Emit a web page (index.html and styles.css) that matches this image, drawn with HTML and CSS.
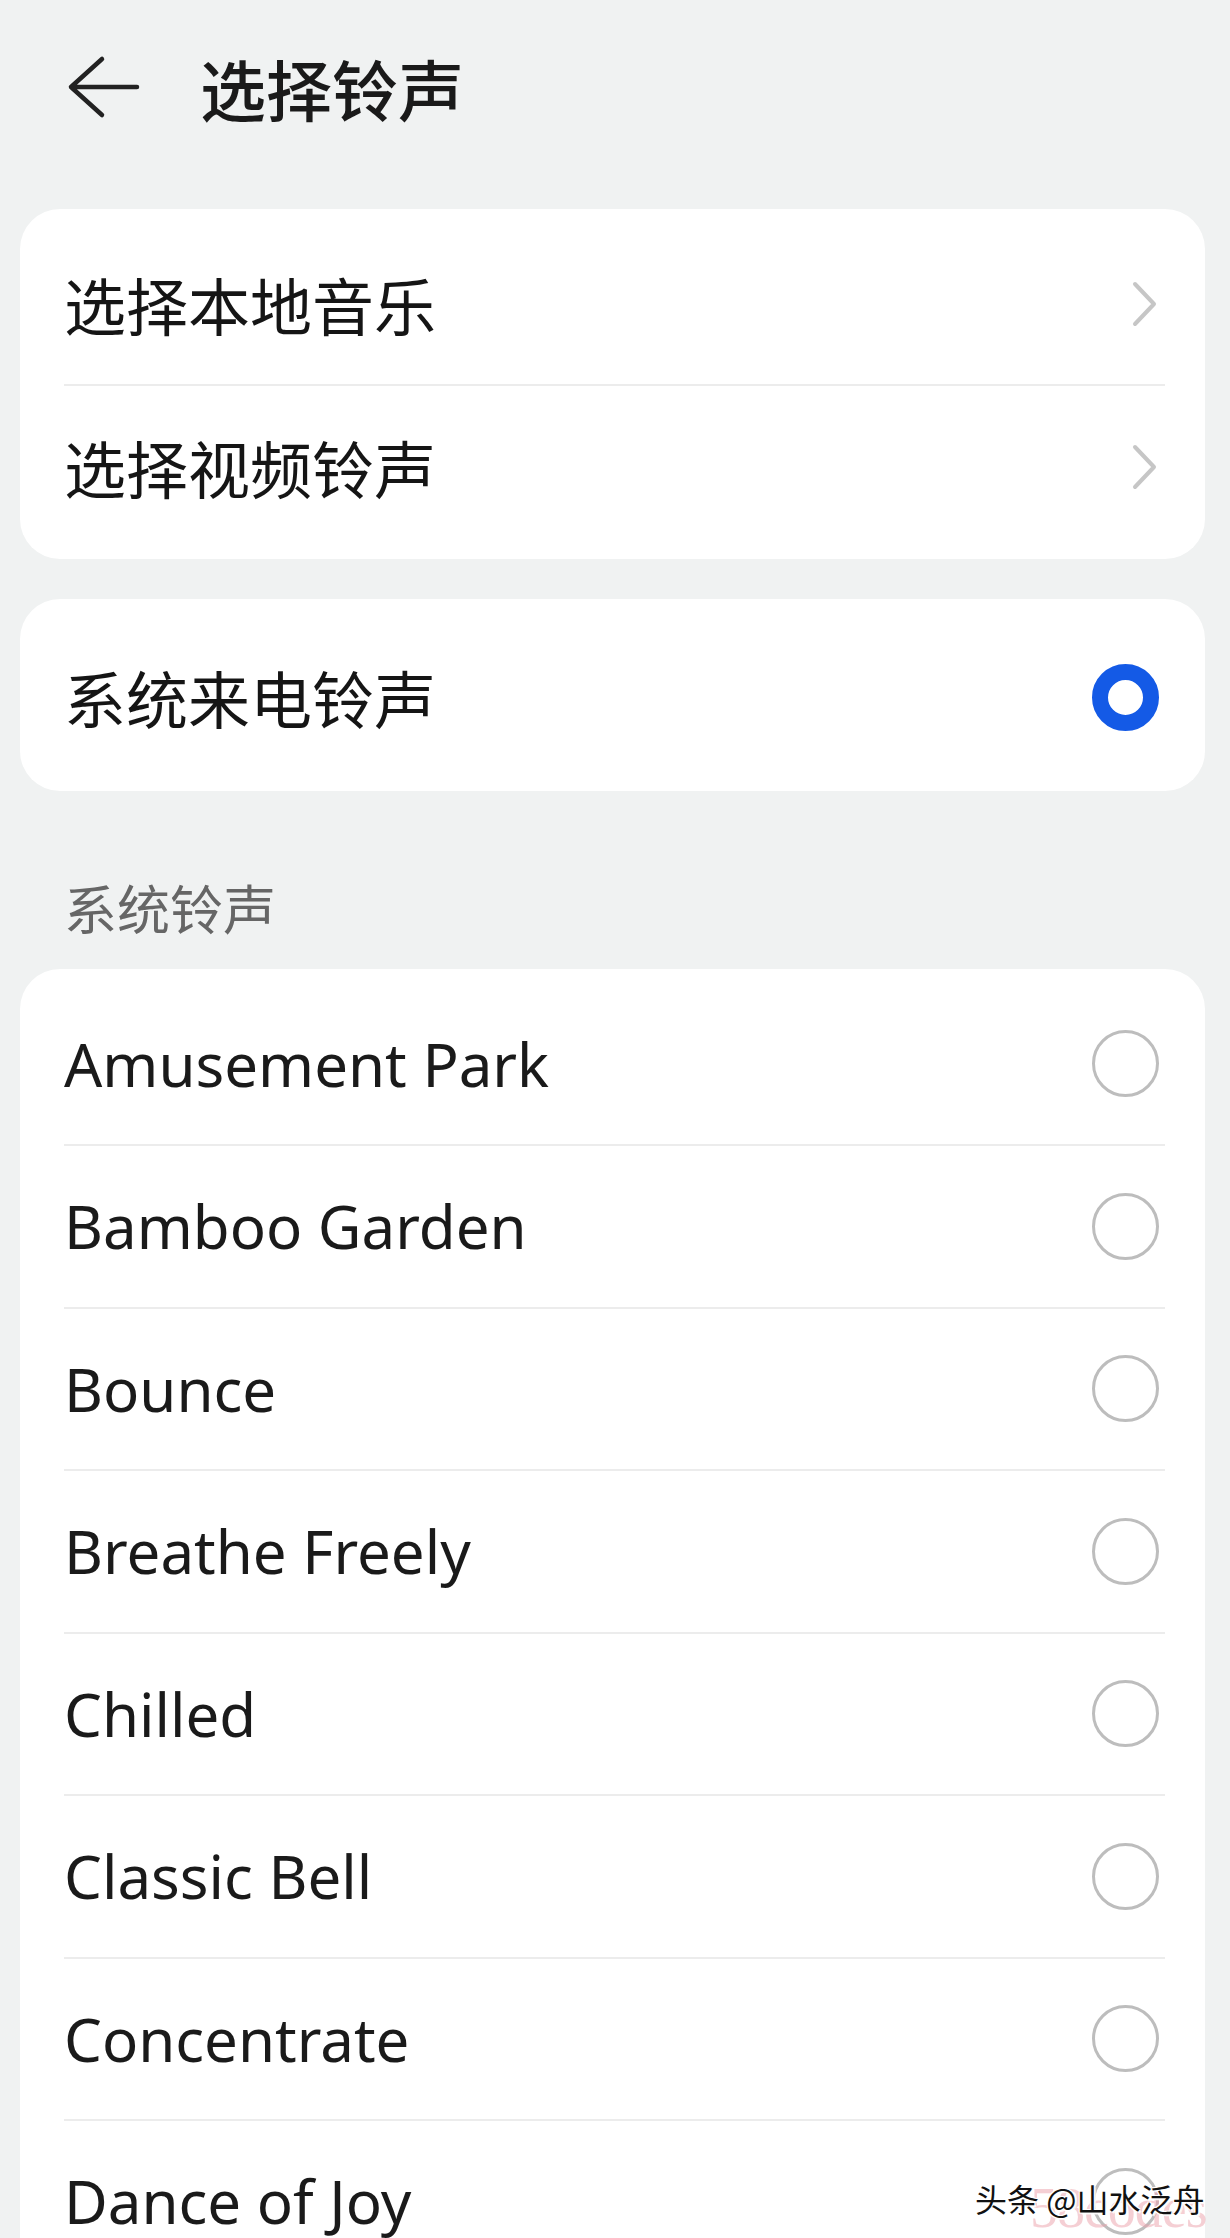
FILE: index.html
```html
<!DOCTYPE html>
<html lang="zh-CN">
<head>
<meta charset="utf-8">
<title>选择铃声</title>
<link rel="stylesheet" href="styles.css">
</head>
<body>
<div class="page">
  <header class="topbar">
    <svg class="back" viewBox="0 0 74 68" width="74" height="68" aria-hidden="true">
      <path d="M36 6 L5 34 L36 62 M5 34 H71" fill="none" stroke="#222" stroke-width="4.5" stroke-linecap="round" stroke-linejoin="round"/>
    </svg>
    <h1 class="title">选择铃声</h1>
  </header>

  <section class="card card-links">
    <div class="row link-row">
      <span class="label cjk">选择本地音乐</span>
      <svg class="chev" viewBox="0 0 28 46" width="28" height="46" aria-hidden="true"><path d="M4 3 L23 23 L4 43" fill="none" stroke="#c6c6c6" stroke-width="4" stroke-linecap="round" stroke-linejoin="round"/></svg>
    </div>
    <div class="row link-row">
      <span class="label cjk">选择视频铃声</span>
      <svg class="chev" viewBox="0 0 28 46" width="28" height="46" aria-hidden="true"><path d="M4 3 L23 23 L4 43" fill="none" stroke="#c6c6c6" stroke-width="4" stroke-linecap="round" stroke-linejoin="round"/></svg>
    </div>
  </section>

  <section class="card card-single">
    <div class="row single-row">
      <span class="label cjk">系统来电铃声</span>
      <span class="radio radio-on"></span>
    </div>
  </section>

  <div class="section-title">系统铃声</div>

  <section class="card card-list">
    <div class="row item"><span class="label">Amusement Park</span><span class="radio"></span></div>
    <div class="row item"><span class="label">Bamboo Garden</span><span class="radio"></span></div>
    <div class="row item"><span class="label">Bounce</span><span class="radio"></span></div>
    <div class="row item"><span class="label">Breathe Freely</span><span class="radio"></span></div>
    <div class="row item"><span class="label">Chilled</span><span class="radio"></span></div>
    <div class="row item"><span class="label">Classic Bell</span><span class="radio"></span></div>
    <div class="row item"><span class="label">Concentrate</span><span class="radio"></span></div>
    <div class="row item"><span class="label">Dance of Joy</span><span class="radio"></span></div>
  </section>

  <div class="wm-pink">58codes</div>
  <div class="wm">头条 @山水泛舟</div>
</div>
</body>
</html>
```

FILE: styles.css
```css
html, body {
  margin: 0;
  padding: 0;
  height: 2238px;
  overflow: hidden;
  background: #f0f2f2;
}

.page {
  position: relative;
  height: 2238px;
  overflow: hidden;
  font-family: "Noto Sans", "Noto Sans CJK SC", sans-serif;
  color: #1a1a1a;
}

.topbar {
  display: flex;
  align-items: center;
  height: 174px;
  padding-left: 66px;
  box-sizing: border-box;
}

.back {
  display: block;
}

.title {
  margin: 0 0 0 60px;
  font-family: "Noto Sans CJK SC", sans-serif;
  font-size: 66px;
  font-weight: 500;
  line-height: 1;
  color: #1a1a1a;
}

.card {
  background: #ffffff;
  border-radius: 40px;
  margin-left: 20px;
  width: 1185px;
  box-sizing: border-box;
  padding: 0 40px 0 44px;
}

.card-links {
  margin-top: 35px;
}

.row {
  display: flex;
  align-items: center;
  justify-content: space-between;
  box-sizing: border-box;
}

.label {
  font-size: 60px;
  line-height: 1;
  font-family: "Noto Sans", "Noto Sans CJK SC", sans-serif;
}

.label.cjk {
  font-family: "Noto Sans CJK SC", sans-serif;
  font-size: 62px;
  font-weight: 400;
  color: #151515;
}

.link-row {
  height: 175px;
}

.link-row:first-child {
  padding-top: 14px;
}

.link-row:last-child {
  padding-bottom: 12px;
}

.link-row + .link-row {
  border-top: 2px solid #ececec;
}

.chev {
  display: block;
  margin-right: 6px;
}

.card-single {
  margin-top: 40px;
}

.single-row {
  height: 192px;
  padding-top: 4px;
}

.radio {
  width: 67px;
  height: 67px;
  box-sizing: border-box;
  border-radius: 50%;
  border: 3px solid #bdbdbd;
  margin-right: 6px;
  flex-shrink: 0;
}

.radio-on {
  border: 16px solid #145ae6;
}

.section-title {
  margin: 81px 0 27px 64px;
  height: 70px;
  display: flex;
  align-items: center;
  font-family: "Noto Sans CJK SC", sans-serif;
  font-size: 53px;
  color: #666666;
}

.card-list {
  padding-top: 14px;
  padding-bottom: 40px;
}

.item {
  height: 162.5px;
}

.item:first-child {
  height: 161px;
}

.item + .item {
  border-top: 2px solid #ececec;
}

.wm {
  position: absolute;
  left: 975px;
  top: 2178px;
  font-family: "Noto Sans CJK SC", sans-serif;
  font-size: 32px;
  line-height: 40px;
  color: #111111;
  white-space: nowrap;
  text-shadow: 1px 1px 0 #fff, -1px -1px 0 #fff, 1px -1px 0 #fff, -1px 1px 0 #fff, 2px 2px 0 rgba(255,255,255,0.8);
}

.wm-pink {
  position: absolute;
  left: 1030px;
  top: 2178px;
  font-family: "Liberation Serif", serif;
  font-size: 56px;
  line-height: 60px;
  color: rgba(236, 160, 170, 0.5);
  white-space: nowrap;
  letter-spacing: -1px;
}
```
